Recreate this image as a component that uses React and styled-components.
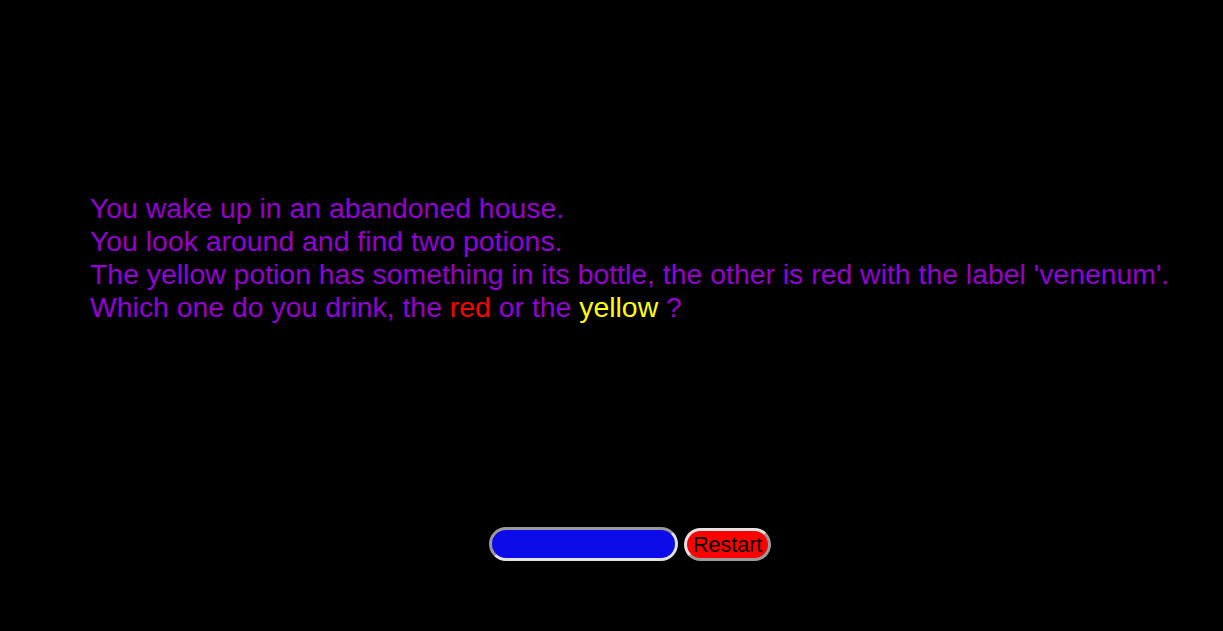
import React from "react";
import styled, { createGlobalStyle } from "styled-components";

const Global = createGlobalStyle`
  html, body { margin: 0; padding: 0; background: #000; }
  body { font-family: "Liberation Sans", Arial, sans-serif; }
`;

const Page = styled.div`
  width: 1223px;
  height: 631px;
  background: #000;
  display: flex;
  flex-direction: column;
`;

const Story = styled.div`
  padding: 192px 0 0 90px;
  height: 330px;
  box-sizing: border-box;
  font-size: 28.4px;
  line-height: 33px;
  color: #9400d3;
`;

const Line = styled.div`
  white-space: nowrap;
`;

const Word = styled.span`
  color: ${(p) => p.$c};
`;

const Controls = styled.div`
  display: flex;
  align-items: center;
  gap: 6px;
  padding: 197px 0 0 489px;
`;

const Input = styled.input`
  width: 189px;
  height: 34px;
  box-sizing: border-box;
  background: #0c0ce8;
  border: 3px solid;
  border-color: #9a9a9a #e2e2e2 #e2e2e2 #9a9a9a;
  border-radius: 17px;
  outline: none;
`;

const Button = styled.button`
  height: 33px;
  box-sizing: border-box;
  background: #ff0000;
  border: 3px solid;
  border-color: #e2e2e2 #9a9a9a #9a9a9a #e2e2e2;
  border-radius: 17px;
  font-family: "Liberation Sans", Arial, sans-serif;
  font-size: 21.5px;
  line-height: 1;
  color: #000;
  padding: 3px 6px 0;
`;

export default function App() {
  return (
    <Page>
      <Global />
      <Story>
        <Line>You wake up in an abandoned house.</Line>
        <Line>You look around and find two potions.</Line>
        <Line>The yellow potion has something in its bottle, the other is red with the label 'venenum'.</Line>
        <Line>
          Which one do you drink, the <Word $c="#ff0000">red</Word> or the{" "}
          <Word $c="#ffff00">yellow</Word> ?
        </Line>
      </Story>
      <Controls>
        <Input type="text" />
        <Button>Restart</Button>
      </Controls>
    </Page>
  );
}
